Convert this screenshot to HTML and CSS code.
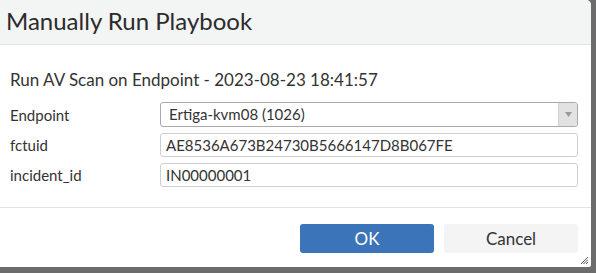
FILE: index.html
```html
<!DOCTYPE html>
<html>
<head>
<meta charset="utf-8">
<link rel="stylesheet" href="styles.css">
</head>
<body>
<div class="dialog">
  <div class="header">Manually Run Playbook</div>
  <div class="body">
    <div class="subtitle">Run AV Scan on Endpoint - 2023-08-23 18:41:57</div>
    <div class="form">
      <div class="label">Endpoint</div>
      <div class="select">
        <span class="value">Ertiga-kvm08 (1026)</span>
        <span class="arrow"><svg width="7" height="5" viewBox="0 0 7 5"><path d="M0 0h7L3.5 5z" fill="#9a9a9a"/></svg></span>
      </div>
      <div class="label">fctuid</div>
      <div class="input">AE8536A673B24730B5666147D8B067FE</div>
      <div class="label">incident_id</div>
      <div class="input">IN00000001</div>
    </div>
  </div>
  <div class="footer">
    <button class="btn primary">OK</button>
    <button class="btn secondary">Cancel</button>
    <svg class="grip" width="7" height="7" viewBox="0 0 7 7"><path d="M7 0L0 7M7 2.5L2.5 7M7 5L5 7" stroke="#555" stroke-width="1"/></svg>
  </div>
</div>
</body>
</html>
```

FILE: styles.css
```css
html, body {
  margin: 0;
  padding: 0;
}
body {
  width: 596px;
  height: 273px;
  background: #6c6c6c;
  font-family: Lato, "Open Sans", sans-serif;
  color: #333;
  overflow: hidden;
}
.dialog {
  width: 591px;
  height: 267px;
  background: #fff;
  border-top-right-radius: 5px;
  border-bottom-right-radius: 2px;
  position: relative;
  display: flex;
  flex-direction: column;
}
.header {
  height: 45px;
  box-sizing: border-box;
  background: #f3f4f4;
  border-bottom: 1px solid #e3e3e3;
  border-top-right-radius: 5px;
  font-size: 24px;
  line-height: 42px;
  padding-left: 6px;
  color: #2b2b2b;
}
.body {
  padding: 25px 13px 0 10px;
}
.subtitle {
  font-size: 17px;
  line-height: 20px;
  color: #333;
  margin-bottom: 12px;
}
.form {
  display: grid;
  grid-template-columns: 150px 1fr;
  row-gap: 6px;
  align-items: center;
}
.label {
  font-size: 15px;
  color: #333;
}
.select, .input {
  height: 24px;
  box-sizing: border-box;
  border: 1px solid #cfcfcf;
  border-radius: 3px;
  font-size: 15px;
  line-height: 22px;
  padding-left: 5px;
  color: #333;
}
.select {
  display: flex;
  border-color: #aaa;
  height: 25px;
  line-height: 23px;
  padding-left: 0;
}
.select .value {
  flex: 1;
  padding-left: 8px;
}
.select .arrow {
  width: 18px;
  background: #e2e2e2;
  border-left: 1px solid #d0d0d0;
  border-radius: 0 2px 2px 0;
  display: flex;
  align-items: center;
  justify-content: center;
}
.footer {
  margin-top: auto;
  height: 60px;
  box-sizing: border-box;
  border-top: 1px solid #e3e3e3;
  display: flex;
  justify-content: flex-end;
  align-items: center;
  gap: 10px;
  padding: 2px 13px 0 0;
  position: relative;
}
.btn {
  width: 134px;
  height: 29px;
  border: none;
  border-radius: 3px;
  font-family: Lato, "Open Sans", sans-serif;
  font-size: 17px;
}
.primary {
  background: #3b74b8;
  color: #fff;
}
.secondary {
  background: #f4f4f4;
  color: #333;
}
.grip {
  position: absolute;
  right: 3px;
  bottom: 3px;
}
```
